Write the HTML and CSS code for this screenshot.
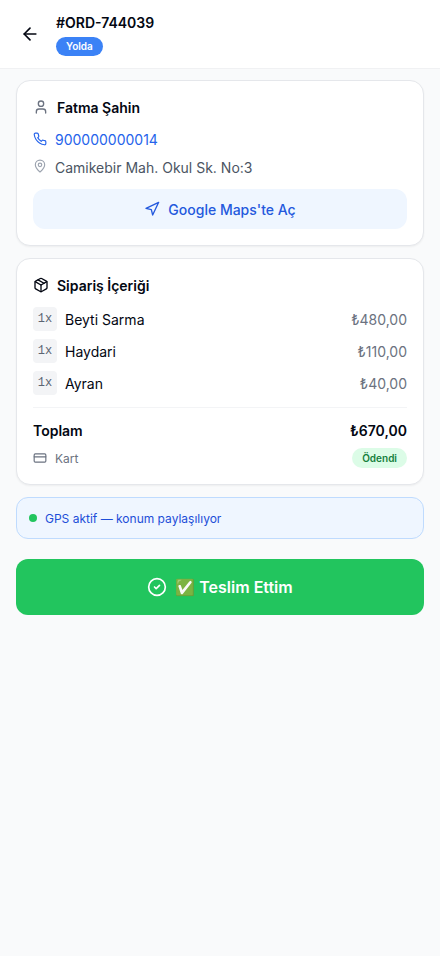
FILE: index.html
```html
<!DOCTYPE html>
<html lang="tr">
<head>
<meta charset="utf-8">
<title>#ORD-744039</title>
<link rel="stylesheet" href="styles.css">
</head>
<body>
<header class="header">
  <svg class="icon back" viewBox="0 0 24 24"><path d="m12 19-7-7 7-7"/><path d="M19 12H5"/></svg>
  <div class="heading">
    <h1>#ORD-744039</h1>
    <span class="badge badge-blue">Yolda</span>
  </div>
</header>
<main>
  <section class="card customer">
    <h2 class="title"><svg class="icon i16 gray" viewBox="0 0 24 24"><path d="M19 21v-2a4 4 0 0 0-4-4H9a4 4 0 0 0-4 4v2"/><circle cx="12" cy="7" r="4"/></svg>Fatma Şahin</h2>
    <a class="line phone"><svg class="icon i14" viewBox="0 0 24 24"><path d="M22 16.92v3a2 2 0 0 1-2.18 2 19.79 19.79 0 0 1-8.63-3.07 19.5 19.5 0 0 1-6-6 19.79 19.79 0 0 1-3.07-8.67A2 2 0 0 1 4.11 2h3a2 2 0 0 1 2 1.72 12.84 12.84 0 0 0 .7 2.81 2 2 0 0 1-.45 2.11L8.09 9.91a16 16 0 0 0 6 6l1.27-1.27a2 2 0 0 1 2.11-.45 12.84 12.84 0 0 0 2.81.7A2 2 0 0 1 22 16.92z"/></svg>900000000014</a>
    <p class="line address"><svg class="icon i14 pin" viewBox="0 0 24 24"><path d="M20 10c0 4.993-5.539 10.193-7.399 11.799a1 1 0 0 1-1.202 0C9.539 20.193 4 14.993 4 10a8 8 0 0 1 16 0"/><circle cx="12" cy="10" r="3"/></svg>Camikebir Mah. Okul Sk. No:3</p>
    <a class="maps"><svg class="icon i16" viewBox="0 0 24 24"><polygon points="3 11 22 2 13 21 11 13 3 11"/></svg>Google Maps'te Aç</a>
  </section>
  <section class="card order">
    <h2 class="title"><svg class="icon i16" viewBox="0 0 24 24"><path d="M11 21.73a2 2 0 0 0 2 0l7-4A2 2 0 0 0 21 16V8a2 2 0 0 0-1-1.73l-7-4a2 2 0 0 0-2 0l-7 4A2 2 0 0 0 3 8v8a2 2 0 0 0 1 1.73z"/><path d="M12 22V12"/><path d="m3.3 7 8.7 5 8.7-5"/><path d="m7.5 4.27 9 5.15"/></svg>Sipariş İçeriği</h2>
    <ul class="items">
      <li><span class="qty">1x</span><span class="name">Beyti Sarma</span><span class="price">₺480,00</span></li>
      <li><span class="qty">1x</span><span class="name">Haydari</span><span class="price">₺110,00</span></li>
      <li><span class="qty">1x</span><span class="name">Ayran</span><span class="price">₺40,00</span></li>
    </ul>
    <div class="total"><span>Toplam</span><span>₺670,00</span></div>
    <div class="payment">
      <span class="method"><svg class="icon i14" viewBox="0 0 24 24"><rect width="20" height="14" x="2" y="5" rx="2"/><path d="M2 10h20"/></svg><span>Kart</span></span>
      <span class="badge badge-green">Ödendi</span>
    </div>
  </section>
  <div class="gps"><span class="dot"></span><span>GPS aktif — konum paylaşılıyor</span></div>
  <button class="deliver"><svg class="icon i20" viewBox="0 0 24 24"><circle cx="12" cy="12" r="10"/><path d="m9 12 2 2 4-4"/></svg><span>✅ Teslim Ettim</span></button>
</main>
</body>
</html>
```
FILE: styles.css
```css
* { box-sizing: border-box; }
body {
  margin: 0;
  min-height: 100vh;
  background: #f9fafb;
  color: #030712;
  font: 14px/20px Inter, "Noto Sans", sans-serif;
}
h1, h2, p, ul { margin: 0; padding: 0; }
.icon {
  flex: none;
  fill: none;
  stroke: currentColor;
  stroke-width: 2;
  stroke-linecap: round;
  stroke-linejoin: round;
}
.back { width: 20px; height: 20px; }
.i14 { width: 14px; height: 14px; }
.i16 { width: 16px; height: 16px; }
.i20 { width: 20px; height: 20px; }
.gray { color: #6b7280; }
.header {
  display: flex;
  align-items: center;
  gap: 16px;
  height: 69px;
  padding: 0 20px;
  background: #fff;
  border-bottom: 1px solid #f0f1f3;
}
.heading { display: flex; flex-direction: column; align-items: flex-start; gap: 4px; }
h1 { font-size: 14px; line-height: 20px; font-weight: 600; }
.badge {
  display: flex;
  align-items: center;
  height: 20px;
  padding: 0 10px;
  border-radius: 10px;
  font-size: 10px;
  font-weight: 600;
}
.badge-blue { height: 19px; background: #3b82f6; color: #fff; }
.badge-green { background: #dcfce7; color: #15803d; }
main { display: flex; flex-direction: column; padding: 11px 16px; }
.card {
  padding: 16px;
  background: #fff;
  border: 1px solid #e5e7eb;
  border-radius: 14px;
  box-shadow: 0 1px 2px rgba(0, 0, 0, .05);
}
.customer { height: 166px; margin-bottom: 12px; }
.order { height: 227px; margin-bottom: 12px; }
.title {
  display: flex;
  align-items: center;
  gap: 8px;
  height: 21px;
  font-size: 14px;
  font-weight: 600;
}
.title .icon { margin-bottom: 1px; }
.line { display: flex; align-items: center; gap: 8px; height: 20px; }
.phone { margin-top: 12px; color: #2563eb; }
.phone .icon { margin-bottom: 2px; }
.address { margin-top: 8px; color: #4b5563; }
.pin { align-self: flex-start; margin-top: 1px; color: #9ca3af; }
.maps {
  display: flex;
  align-items: center;
  justify-content: center;
  gap: 8px;
  height: 40px;
  margin-top: 11px;
  padding-top: 1px;
  border-radius: 12px;
  background: #eff6ff;
  color: #2459dd;
  font-weight: 500;
}
.maps .icon { margin-bottom: 2px; }
.items { display: flex; flex-direction: column; gap: 8px; margin-top: 11px; list-style: none; }
.items li { display: flex; align-items: center; height: 24px; }
.qty {
  width: 24px;
  height: 24px;
  margin-right: 8px;
  border-radius: 4px;
  background: #f3f4f6;
  color: #5b6472;
  font: 12px/24px "Liberation Mono", monospace;
  text-align: center;
}
.name, .price { padding-top: 1px; }
.name { flex: 1; }
.price { color: #6b7280; }
.total {
  display: flex;
  justify-content: space-between;
  margin-top: 12px;
  padding-top: 13px;
  border-top: 1px solid #f3f4f6;
  font-weight: 600;
}
.payment {
  display: flex;
  justify-content: space-between;
  align-items: flex-start;
  height: 20px;
  margin-top: 7px;
}
.method { display: flex; align-items: center; gap: 8px; height: 20px; color: #6b7280; font-size: 12px; }
.method span { padding-top: 1px; }
.gps {
  display: flex;
  align-items: center;
  gap: 8px;
  height: 42px;
  padding: 0 12px;
  border: 1px solid #bfdbfe;
  border-radius: 12px;
  background: #eff6ff;
  color: #1d4ed8;
  font-size: 12px;
}
.gps span:last-child { padding-top: 1px; }
.dot { width: 8px; height: 8px; border-radius: 50%; background: #22c55e; }
.deliver {
  display: flex;
  align-items: center;
  justify-content: center;
  gap: 8px;
  height: 56px;
  margin-top: 20px;
  padding: 0;
  border: 0;
  border-radius: 12px;
  background: #22c55e;
  color: #fff;
  font: 600 16px/24px Inter, "Noto Color Emoji", sans-serif;
}
```
